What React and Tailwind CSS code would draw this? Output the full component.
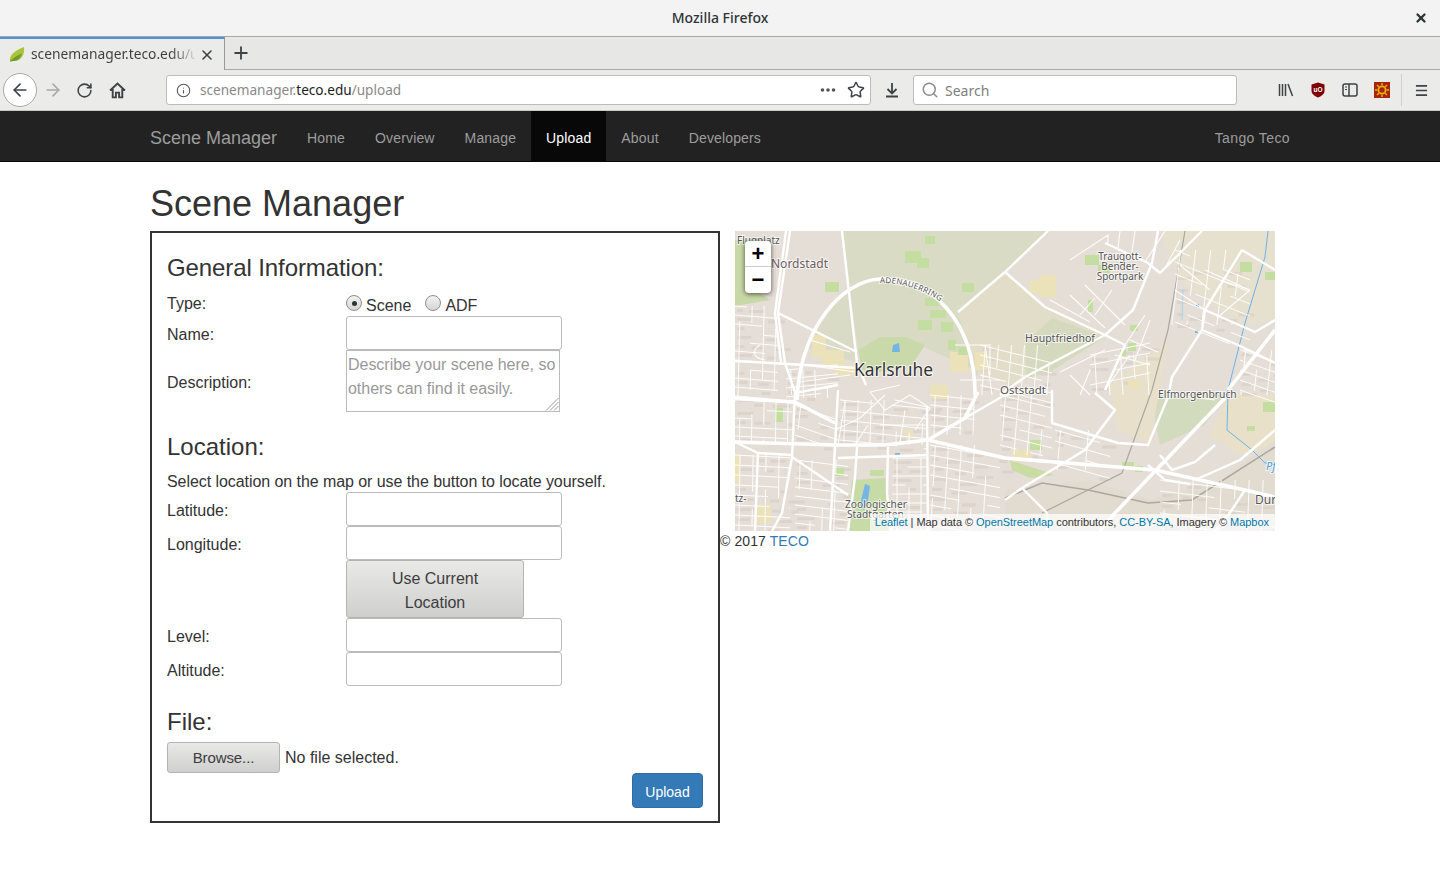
import React from "react";
import { ArrowLeft, ArrowRight, RotateCw, Info, Search, X, Plus, Star } from "lucide-react";

const MAJOR = [
  "M797 400C800 330 840 281 880 279C930 276 975 320 975 395",
  "M735 398L795 402L835 423",
  "M735 442L835 445L885 445L928 440L965 418L978 392",
  "M928 440L1005 458L1155 470L1245 490L1275 497",
  "M1225 398L1115 513L1100 531",
  "M1228 390L1275 330",
];

const MEDIUM = [
  "M842 231L857 363L866 385",
  "M790 231L778 313L785 363L795 392L792 457L782 513L772 531",
  "M786 231L775 313L781 362",
  "M778 313L857 352",
  "M735 361L857 368",
  "M958 312L1005 272L1048 231",
  "M1005 272L1045 307L1105 335L1125 345L1105 390",
  "M1025 377L1105 335L1133 310L1152 263L1158 231",
  "M1000 395L1025 377",
  "M1105 243L1148 263L1160 273L1202 231",
  "M1242 250L1205 310L1202 330L1172 377L1168 397L1148 445L1118 443L1052 423L1052 390",
  "M1205 310L1255 332L1275 320",
  "M1202 330L1238 345L1275 363",
  "M1022 488L1085 450L1115 410L1095 393",
  "M1022 488L1047 513L1047 531",
  "M838 390L835 447L830 531",
  "M795 393L838 385",
  "M735 442L758 453L792 455",
  "M758 453L755 531",
  "M792 457L848 495",
  "M838 458L928 455",
  "M857 447L855 477L848 531",
  "M888 447L887 493L891 531",
  "M927 407L928 531",
  "M965 418L1005 395L1045 390",
  "M1242 250L1275 270",
  "M1005 500L1022 488",
  "M1160 455L1172 470L1195 462L1215 445",
  "M1148 465L1165 480L1190 484",
  "M1275 430L1240 460L1195 480",
  "M1245 490L1225 520L1215 531",
];

const MINOR =
  "M760 345C752 350 752 358 765 360M810 340L850 352M850 375L800 382M805 365L855 372" +
  "M900 385L870 392L885 410L910 395L930 408L915 430M928 407L895 400M860 418L885 395M905 410L900 442M880 425L925 425M860 418L835 430M868 425L855 445M845 402L838 445" +
  "M955 345L990 345L990 375M960 380L1000 380M985 345L992 395" +
  "M1070 260L1108 235L1108 243M1120 231L1118 248M1135 231L1132 252M1165 231L1145 262M1180 240L1165 268M1070 295L1105 328M1085 285L1125 325M1095 298L1080 315M1112 290L1095 315M1050 300L1090 322M1145 315L1125 345M1130 340L1158 352M1150 320L1135 360M1115 355L1150 365M1105 390L1130 355M1090 370L1080 395M1060 372L1105 350M1070 375L1090 395" +
  "M1180 265L1210 290M1205 270L1250 290M1250 290L1218 317M1220 280L1250 290M1175 290L1205 310M1175 395L1215 400";

// side streets: [x0, y0, x1, y1, step, slope]
const BLOCKS = [
  [735, 306, 778, 398, 9, 0.08],
  [786, 370, 838, 398, 9, -0.1],
  [735, 400, 795, 442, 9, 0.05],
  [795, 405, 838, 445, 10, 0.35],
  [840, 400, 927, 445, 10, 0.1],
  [735, 455, 790, 531, 10, 0.05],
  [795, 460, 848, 531, 9, 0.12],
  [892, 458, 927, 531, 9, 0],
  [930, 445, 1000, 531, 10, 0.18],
  [930, 395, 975, 435, 10, 0.1],
  [980, 345, 1052, 395, 10, 0.25],
  [1000, 395, 1052, 455, 10, 0.25],
  [1055, 430, 1110, 470, 11, 0.28],
  [1160, 480, 1275, 531, 11, 0.12],
  [1175, 250, 1250, 325, 12, 0.4],
  [1090, 355, 1150, 395, 10, -0.2],
  [1240, 350, 1275, 395, 10, 0.35],
];

function buildStreets() {
  let seed = 17;
  const rnd = () => {
    seed = (seed * 16807) % 2147483647;
    return seed / 2147483647;
  };
  let d = "";
  let houses = "";
  const r = (n) => Math.round(n * 10) / 10;
  BLOCKS.forEach(([x0, y0, x1, y1, step, slope]) => {
    for (let y = y0; y < y1; y += step) {
      let x = x0;
      while (x < x1) {
        const len = 12 + rnd() * 24;
        const end = Math.min(x + len, x1);
        if (rnd() > 0.2) {
          d += `M${r(x)} ${r(y + (x - x0) * slope)}L${r(end)} ${r(y + (end - x0) * slope)}`;
        }
        if (rnd() > 0.35) {
          houses += `M${r(x + 2)} ${r(y + 3 + (x - x0) * slope)}h${r(len * 0.5)}v3h-${r(len * 0.5)}z`;
        }
        x = end;
      }
    }
    for (let x = x0 + 5; x < x1; x += step + 3) {
      const lean = slope * 2;
      let y = y0;
      while (y < y1) {
        const len = 12 + rnd() * 22;
        const end = Math.min(y + len, y1);
        if (rnd() > 0.3) {
          d += `M${r(x - (y - y0) * slope * 0.3 + lean)} ${r(y)}L${r(x - (end - y0) * slope * 0.3 + lean)} ${r(end)}`;
        }
        y = end;
      }
    }
  });
  return { d, houses };
}

const STREETS = buildStreets();

const Area = ({ points, fill }) => <polygon points={points} fill={fill} />;

const patches = [
  [905, 251, 16, 12], [917, 258, 12, 10], [925, 298, 14, 8], [930, 310, 16, 8], [918, 320, 14, 10], [941, 322, 12, 10],
  [958, 347, 10, 8], [948, 340, 8, 10], [825, 282, 14, 10], [962, 283, 12, 9], [925, 236, 10, 8],
  [1085, 255, 14, 10], [1098, 265, 12, 8], [1088, 300, 5, 12], [1130, 325, 8, 6], [1128, 343, 8, 8], [1120, 350, 6, 6],
  [1240, 262, 12, 10], [1265, 272, 10, 8], [1030, 440, 12, 10], [1122, 462, 12, 7], [1135, 466, 8, 6], [1263, 402, 12, 10], [1247, 426, 8, 5],
  [775, 408, 8, 14], [835, 468, 9, 8], [870, 470, 14, 6],
];

const tans = [
  [812, 335, 14, 22], [822, 350, 22, 18], [835, 365, 18, 10], [950, 352, 18, 20], [975, 352, 12, 18], [930, 385, 18, 14],
  [1030, 280, 22, 14], [1040, 275, 16, 22], [1012, 450, 18, 12], [755, 505, 16, 18], [735, 455, 5, 28], [1128, 380, 12, 8], [905, 430, 8, 8],
];

function MapCanvas() {
  return (
    <svg viewBox="735 231 540 300" className="block w-full h-full" style={{ fontFamily: "'Noto Sans', sans-serif" }}>
      <rect x="735" y="231" width="540" height="300" fill="#e5ded6" />
      <Area points="842,231 1048,231 1005,272 1045,307 990,345 975,380 958,320 920,285 880,279 850,290" fill="#d9dbc5" />
      <Area points="880,279 925,283 960,320 975,370 930,350 905,337 880,337 858,350 850,290" fill="#d8dac3" />
      <Area points="805,345 848,288 857,362 815,352" fill="#d9dbc6" />
      <Area points="1005,272 1045,307 1105,335 1050,372 1010,385 975,370 958,312" fill="#e2ddc9" />
      <Area points="1026,342 1052,318 1105,337 1050,372 1026,378" fill="#d5dabf" />
      <Area points="858,350 880,337 905,337 925,345 912,365 880,372 862,370" fill="#c9d9a9" />
      <Area points="735,240 760,240 755,290 770,300 735,306" fill="#c8d8a6" />
      <Area points="1160,231 1275,231 1275,320 1240,325 1180,280" fill="#e6e0cf" />
      <Area points="1150,395 1225,395 1205,425 1160,445" fill="#d3dbbf" />
      <Area points="1228,395 1275,395 1275,445 1240,455 1210,435" fill="#e8e0c9" />
      <Area points="1110,385 1168,340 1150,445 1118,430" fill="#e8e0cb" />
      <Area points="1005,490 1090,480 1150,500 1220,480 1275,440 1275,531 1005,531" fill="#e2dcd0" />
      <path d={STREETS.houses} fill="#d8d0c7" opacity="0.7" />
      <Area points="1010,460 1055,475 1030,478 1012,470" fill="#c9dca4" />
      <Area points="852,480 885,478 888,531 848,531" fill="#c7dba7" />
      {tans.map(([x, y, w, h], i) => (
        <rect key={i} x={x} y={y} width={w} height={h} fill="#ece2b9" />
      ))}
      {patches.map(([x, y, w, h], i) => (
        <rect key={i} x={x} y={y} width={w} height={h} fill="#c3dea0" />
      ))}
      <path d="M893 345L899 343L900 352L892 352Z" fill="#75b5e6" />
      <path d="M865 484L870 486L868 500L864 510L860 505Z" fill="#75b5e6" />
      <path d="M1195 330h3v3h-3zM1196 304h3v3h-3zM895 453h5v2h-5z" fill="#75b5e6" />
      <path d="M1268 231L1265 257L1245 323L1228 390L1227 430L1252 450L1265 463L1275 463" fill="none" stroke="#6db3e8" strokeWidth="1" />
      <path d="M1183 290L1182 320" fill="none" stroke="#a8d3ec" strokeWidth="1" />
      <path d="M1005 498L1042 483L1088 490L1148 503L1192 500L1275 447" fill="none" stroke="#aaa8a0" strokeWidth="1.6" />
      <path d="M1185 231L1168 330L1152 390L1122 473L1042 513" fill="none" stroke="#aaa8a0" strokeWidth="1.2" />
      <path d={STREETS.d} fill="none" stroke="#ffffff" strokeWidth="1" opacity="0.9" />
      <path d={MINOR} fill="none" stroke="#ffffff" strokeWidth="1.1" opacity="0.9" />
      {MEDIUM.map((d, i) => (
        <path key={i} d={d} fill="none" stroke="#ffffff" strokeWidth="2.4" strokeLinejoin="round" />
      ))}
      {MAJOR.map((d, i) => (
        <path key={i} d={d} fill="none" stroke="#ffffff" strokeWidth="3.6" strokeLinejoin="round" />
      ))}
      <path id="adenauer" d="M880 283C900 282 925 290 944 304" fill="none" />
      <g fill="#555" stroke="#ffffff" strokeWidth="2" strokeOpacity="0.7" style={{ paintOrder: "stroke" }}>
        <text fontSize="8" letterSpacing="0.2">
          <textPath href="#adenauer">ADENAUERRING</textPath>
        </text>
        <text x="737" y="244" fontSize="10">Flugplatz</text>
        <text x="771" y="268" fontSize="12" fill="#6b5f5f">Nordstadt</text>
        <text x="854" y="376" fontSize="17.4" fill="#333">Karlsruhe</text>
        <text x="1000" y="394" fontSize="11.5">Oststadt</text>
        <text x="1025" y="342" fontSize="10.5">Hauptfriedhof</text>
        <text x="1120" y="260" fontSize="10" textAnchor="middle">Traugott-</text>
        <text x="1120" y="270" fontSize="10" textAnchor="middle">Bender-</text>
        <text x="1120" y="280" fontSize="10" textAnchor="middle">Sportpark</text>
        <text x="1158" y="398" fontSize="10.3">Elfmorgenbruch</text>
        <text x="735" y="502" fontSize="10">tz-</text>
        <text x="845" y="508" fontSize="10.2">Zoologischer</text>
        <text x="847" y="518" fontSize="10.2">Stadtgarten</text>
        <text x="1255" y="504" fontSize="12">Dur</text>
        <text x="1266" y="470" fontSize="11" fill="#4a9fe0" fontStyle="italic">Pf</text>
      </g>
    </svg>
  );
}

function BrowserChrome() {
  return (
    <div className="font-['Noto_Sans',sans-serif] text-[#3d3d3d]">
      {/* title bar */}
      <div className="relative h-[37px] bg-[#f3f3f3] border-b border-[#a8a8a4] flex items-center justify-center pb-[2px]">
        <span className="text-[14px] font-medium text-[#2e3436]">Mozilla Firefox</span>
        <X className="absolute right-[12px] top-[11px] w-[14px] h-[14px] text-[#2e3436]" strokeWidth={4} />
      </div>
      {/* tabs */}
      <div className="h-[33px] bg-[#e7e7e5] flex">
        <div className="w-[225px] h-full bg-[#ebebea] border-t-2 border-[#4f93dd] border-r border-r-[#9a9a98] flex items-center pl-[9px]">
          <svg viewBox="0 0 16 16" className="w-4 h-4 shrink-0">
            <path d="M1 15C0 8 5 4 15 0C16 8 12 14 5 14C3 14 2 14 1 15Z" fill="#a9c43a" />
            <path d="M1 15C4 10 9 9 13 6C12 11 8 14 5 14C3 14 2 14 1 15Z" fill="#6f9a2c" />
          </svg>
          <span className="ml-[6px] w-[164px] overflow-hidden whitespace-nowrap text-[13.8px] bg-gradient-to-r from-[#3d3d3d] from-85% to-[#d8d8d8] bg-clip-text text-transparent">
            scenemanager.teco.edu/upload
          </span>
          <X className="ml-[4px] w-[16px] h-[16px] text-[#3d4346]" strokeWidth={2.4} />
        </div>
        <div className="flex-1 border-b border-[#a8a8a4] pl-[6px] pt-[6px]">
          <Plus className="w-[20px] h-[20px] text-[#3d4346]" strokeWidth={2.2} />
        </div>
      </div>
      {/* toolbar */}
      <div className="relative h-[41px] bg-[#ebebea] border-b border-[#c8c8c6] flex items-center">
        <div className="w-[34px] h-[34px] ml-[3px] rounded-full bg-white border border-[#a9a9a7] flex items-center justify-center">
          <ArrowLeft className="w-[20px] h-[20px] text-[#3d4346]" strokeWidth={2} />
        </div>
        <ArrowRight className="ml-[6px] w-[20px] h-[20px] text-[#a8a8a8]" strokeWidth={2} />
        <RotateCw className="ml-[13px] w-[17px] h-[17px] text-[#3d4346]" strokeWidth={2.2} />
        <svg viewBox="0 0 16 16" className="ml-[16px] w-[17px] h-[17px]">
          <path d="M1 8L8 1.5L15 8M3.5 6.5V14.5H6.5V10H9.5V14.5H12.5V6.5" fill="none" stroke="#3d4346" strokeWidth="1.8" />
        </svg>
        <div className="ml-[40px] w-[705px] h-[30px] bg-white border border-[#bcbcba] rounded-[3px] flex items-center">
          <Info className="ml-[9px] w-[15px] h-[15px] text-[#555]" strokeWidth={1.7} />
          <span className="ml-[9px] text-[13.6px] text-[#8a8a8a]">
            scenemanager.<span className="text-[#1c1c1c]">teco.edu</span>/upload
          </span>
          <svg viewBox="0 0 16 4" className="ml-auto w-[16px] h-[4px]">
            <circle cx="2.5" cy="2" r="1.8" fill="#555" />
            <circle cx="8" cy="2" r="1.8" fill="#555" />
            <circle cx="13.5" cy="2" r="1.8" fill="#555" />
          </svg>
          <Star className="ml-[11px] mr-[5px] w-[18px] h-[18px] text-[#3d4346]" strokeWidth={2} />
        </div>
        <svg viewBox="0 0 16 16" className="ml-[13px] w-[16px] h-[16px]">
          <path d="M8 1V11M3.5 7L8 11.5L12.5 7M2 14.5H14" fill="none" stroke="#3d4346" strokeWidth="1.8" />
        </svg>
        <div className="ml-[13px] w-[324px] h-[30px] bg-white border border-[#bcbcba] rounded-[3px] flex items-center">
          <Search className="ml-[7px] w-[18px] h-[18px] text-[#8d8d8d]" strokeWidth={2} />
          <span className="ml-[6px] text-[14px] text-[#808080]">Search</span>
        </div>
        <svg viewBox="0 0 16 16" className="ml-[41px] w-[16px] h-[16px]">
          <path d="M1.5 2V14M4.5 2V14M7.5 2V14M10 2L14.5 14" fill="none" stroke="#3d4346" strokeWidth="1.5" />
        </svg>
        <svg viewBox="0 0 16 16" className="ml-[16px] w-[16px] h-[16px]" style={{ fontFamily: "'Liberation Sans', sans-serif" }}>
          <path d="M8 0.5L14.5 2.5V9C14.5 12 11 14.5 8 15.5C5 14.5 1.5 12 1.5 9V2.5Z" fill="#800000" />
          <text x="8" y="10" fontSize="6.5" fontWeight="700" textAnchor="middle" fill="#ffffff">uO</text>
        </svg>
        <svg viewBox="0 0 16 16" className="ml-[16px] w-[16px] h-[16px]">
          <rect x="1" y="2" width="14" height="12" rx="2" fill="none" stroke="#3d4346" strokeWidth="1.5" />
          <path d="M7 2V14" stroke="#3d4346" strokeWidth="1.5" />
          <path d="M3 5H5M3 7.5H5" stroke="#3d4346" strokeWidth="1.2" />
        </svg>
        <svg viewBox="0 0 16 16" className="ml-[16px] w-[16px] h-[16px]">
          <rect width="16" height="16" fill="#a8240a" />
          <circle cx="8" cy="8" r="3.6" fill="none" stroke="#e8b010" strokeWidth="1.8" />
          <path d="M8 1V3.5M8 12.5V15M1 8H3.5M12.5 8H15M3 3L4.8 4.8M11.2 11.2L13 13M13 3L11.2 4.8M4.8 11.2L3 13" stroke="#e8b010" strokeWidth="1.5" />
        </svg>
        <div className="ml-[11px] w-px h-[32px] bg-[#d0d0ce]" />
        <svg viewBox="0 0 14 14" className="ml-[13px] w-[13px] h-[13px]">
          <path d="M1 2H13M1 7H13M1 12H13" stroke="#3d4346" strokeWidth="1.8" />
        </svg>
      </div>
    </div>
  );
}

function Navbar() {
  const links = ["Home", "Overview", "Manage", "Upload", "About", "Developers"];
  return (
    <nav className="h-[51px] bg-[#222222] border-b border-[#080808] flex justify-between pl-[150px] pr-[135px] text-[14px] text-[#9d9d9d]">
      <div className="flex">
        <a className="pr-[15px] text-[18px] leading-[54px] h-[50px]">Scene Manager</a>
        {links.map((l) => (
          <a
            key={l}
            className={
              l === "Upload"
                ? "px-[15px] h-[50px] leading-[54px] tracking-[0.15px] bg-[#080808] text-white"
                : "px-[15px] h-[50px] leading-[54px] tracking-[0.15px]"
            }
          >
            {l}
          </a>
        ))}
      </div>
      <a className="px-[15px] h-[50px] leading-[54px] tracking-[0.4px]">Tango Teco</a>
    </nav>
  );
}

function Field({ label, children }) {
  return (
    <div className="flex items-center">
      <label className="w-[179px] shrink-0 pt-1">{label}</label>
      {children}
    </div>
  );
}

const TextInput = () => (
  <input type="text" className="w-[216px] h-[34px] bg-white border border-[#bbbbb9] rounded-[3px]" />
);

function Radio({ checked }) {
  return (
    <span className="flex w-4 h-4 rounded-full border border-[#8f8f8d] bg-gradient-to-b from-[#f2f2f1] to-[#d6d6d4] items-center justify-center">
      {checked && <span className="w-[5px] h-[5px] rounded-full bg-[#2e3436]" />}
    </span>
  );
}

const btn = "bg-gradient-to-b from-[#e9e9e7] to-[#cfcfcd] border border-[#b4b4b2] rounded-[3px] text-[#3d3d3d]";

function UploadForm() {
  return (
    <form className="w-[570px] h-[592px] shrink-0 border-2 border-[#333333] px-[15px] text-[16px] leading-[22.4px]">
      <h3 className="mt-[22px] mb-[9px] text-[24px] leading-[26px] tracking-[-0.1px]">General Information:</h3>
      <div className="flex h-[26px]">
        <label className="w-[179px] shrink-0 pt-[3px]">Type:</label>
        <div className="flex items-center gap-1 h-[28px]">
          <span className="-mt-[2px]"><Radio checked /></span>
          <span className="mr-[10px] pt-[4px]">Scene</span>
          <span className="-mt-[2px]"><Radio /></span>
          <span className="pt-[4px]">ADF</span>
        </div>
      </div>
      <Field label="Name:"><TextInput /></Field>
      <Field label="Description:">
        <div className="relative w-[214px] h-[62px] border border-[#bbbbb9] px-[1px] pt-[2px] text-[#999999] leading-[24px] tracking-[-0.03px]">
          Describe your scene here, so others can find it easily.
          <svg viewBox="0 0 14 14" className="absolute right-0 bottom-0 w-[14px] h-[14px]">
            <path d="M13.5 1L1 13.5M13.5 5L5 13.5M13.5 9L9 13.5" stroke="#9a9a98" strokeWidth="1" />
          </svg>
        </div>
      </Field>
      <h3 className="mt-[22px] mb-[10px] text-[24px] leading-[26px]">Location:</h3>
      <p className="pt-[1px] -mb-[1px] tracking-[-0.065px]">Select location on the map or use the button to locate yourself.</p>
      <Field label="Latitude:"><TextInput /></Field>
      <Field label="Longitude:"><TextInput /></Field>
      <div className="pl-[179px]">
        <button type="button" className={"block w-[178px] h-[58px] leading-[24px] px-8 pt-[3px] " + btn}>
          Use Current Location
        </button>
      </div>
      <Field label="Level:"><TextInput /></Field>
      <Field label="Altitude:"><TextInput /></Field>
      <h3 className="mt-[23px] mb-[7px] text-[24px] leading-[26px]">File:</h3>
      <div className="flex items-center h-[31px]">
        <button type="button" className={"w-[113px] h-[31px] pt-[1px] text-[15px] tracking-[-0.1px] " + btn}>Browse...</button>
        <span className="ml-[5px]">No file selected.</span>
      </div>
      <div className="flex justify-end">
        <button type="button" className="w-[71px] h-[35px] pt-[2px] bg-[#337ab7] border border-[#2e6da4] rounded-[4px] text-[14px] text-white">
          Upload
        </button>
      </div>
    </form>
  );
}

function MapPanel() {
  return (
    <div className="ml-[15px] w-[540px]">
      <div className="relative h-[300px] overflow-hidden">
        <MapCanvas />
        <div className="absolute left-[10px] top-[10px] w-[26px] rounded-[4px] bg-white shadow-[0_1px_5px_rgba(0,0,0,0.65)] text-black font-bold text-center">
          <div className="h-[26px] leading-[26px] text-[22px] border-b border-[#cccccc]">+</div>
          <div className="h-[26px] leading-[26px] text-[22px]">−</div>
        </div>
        <div className="absolute right-0 bottom-0 h-[17px] bg-white/70 pl-[5px] pr-[6px] text-[11px] leading-[16px] tracking-[-0.04px] text-[#333333] whitespace-nowrap">
          <a className="text-[#0078a8]">Leaflet</a> | Map data © <a className="text-[#0078a8]">OpenStreetMap</a> contributors,{" "}
          <a className="text-[#0078a8]">CC-BY-SA</a>, Imagery © <a className="text-[#0078a8]">Mapbox</a>
        </div>
      </div>
      <p className="-ml-[15px] text-[14px] leading-[20px] tracking-[0.1px]">
        © 2017 <a className="text-[#337ab7]">TECO</a>
      </p>
    </div>
  );
}

export default function App() {
  return (
    <div className="h-[873px] overflow-hidden bg-white text-[#333333] font-['Liberation_Sans',Arial,sans-serif]">
      <BrowserChrome />
      <Navbar />
      <div className="px-[150px]">
        <h1 className="pt-[22px] pb-[7px] text-[36px] leading-[40px]">Scene Manager</h1>
        <div className="flex items-start">
          <UploadForm />
          <MapPanel />
        </div>
      </div>
    </div>
  );
}
